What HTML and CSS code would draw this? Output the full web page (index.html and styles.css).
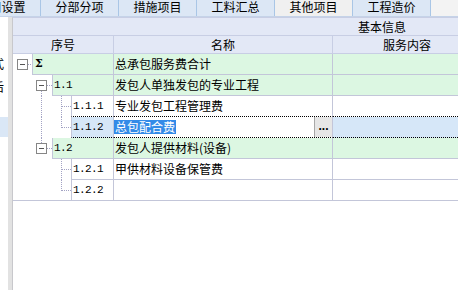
FILE: index.html
```html
<!DOCTYPE html>
<html lang="zh-CN">
  <head>
    <meta charset="UTF-8" />
    <title>其他项目</title>
    <link rel="stylesheet" href="styles.css">
  </head>
  <body>
    <div class="tabs">
      <div class="tab tab-first">费用设置</div>
      <div class="tab">分部分项</div>
      <div class="tab">措施项目</div>
      <div class="tab">工料汇总</div>
      <div class="tab active">其他项目</div>
      <div class="tab">工程造价</div>
    </div>

    <div class="main">
      <div class="side">
        <div class="side-item">计税方式</div>
        <div class="side-item">最后</div>
        <div class="side-item sel"></div>
      </div>
      <div class="splitter"></div>

      <div class="grid">
        <div class="group-head">基本信息</div>
        <div class="col-head">
          <div class="h-code">序号</div>
          <div class="h-name">名称</div>
          <div class="h-serv">服务内容</div>
        </div>

        <!-- Σ -->
        <div class="row green">
          <div class="codecol">
            <svg class="tree" width="19" height="21">
              <path d="M15 10.5h4" class="dot" />
              <rect x="4.5" y="5.5" width="10" height="10" class="box" />
              <path d="M7 10.5h5" class="minus" />
            </svg>
            <div class="code sigma">Σ</div>
          </div>
          <div class="name">总承包服务费合计</div>
          <div class="serv"></div>
        </div>

        <div class="row green">
          <div class="codecol">
            <svg class="tree" width="39" height="21">
              <path d="M34 10.5h5 M28.5 16v5" class="dot" />
              <rect x="23.5" y="5.5" width="10" height="10" class="box" />
              <path d="M26 10.5h5" class="minus" />
            </svg>
            <div class="code">1.1</div>
          </div>
          <div class="name">发包人单独发包的专业工程</div>
          <div class="serv"></div>
        </div>

        <div class="row above-focus">
          <div class="codecol">
            <svg class="tree" width="58" height="21">
              <path d="M28.5 0v21 M48.5 0v21 M49 10.5h9" class="dot" />
            </svg>
            <div class="code">1.1.1</div>
          </div>
          <div class="name">专业发包工程管理费</div>
          <div class="serv"></div>
        </div>

        <div class="row sel">
          <div class="codecol">
            <svg class="tree" width="58" height="21">
              <path d="M28.5 0v21 M48.5 0v11 M49 10.5h9" class="dot" />
            </svg>
            <div class="code">1.1.2</div>
          </div>
          <div class="name editor">
            <div class="edit-text"><span class="hl">总包配合费</span></div>
            <div class="dots">...</div>
          </div>
          <div class="serv"></div>
        </div>

        <div class="row green">
          <div class="codecol">
            <svg class="tree" width="39" height="21">
              <path d="M28.5 0v5 M34 10.5h5" class="dot" />
              <rect x="23.5" y="5.5" width="10" height="10" class="box" />
              <path d="M26 10.5h5" class="minus" />
            </svg>
            <div class="code">1.2</div>
          </div>
          <div class="name">发包人提供材料(设备)</div>
          <div class="serv"></div>
        </div>

        <div class="row">
          <div class="codecol">
            <svg class="tree" width="58" height="21">
              <path d="M48.5 0v21 M49 10.5h9" class="dot" />
            </svg>
            <div class="code">1.2.1</div>
          </div>
          <div class="name">甲供材料设备保管费</div>
          <div class="serv"></div>
        </div>

        <div class="row last">
          <div class="codecol">
            <svg class="tree" width="58" height="20">
              <path d="M48.5 0v11 M49 10.5h9" class="dot" />
            </svg>
            <div class="code">1.2.2</div>
          </div>
          <div class="name"></div>
          <div class="serv"></div>
        </div>

        <div class="empty"></div>
      </div>
    </div>
  </body>
</html>
```

FILE: styles.css
```css
* {
  box-sizing: border-box;
}

body {
  margin: 0;
  width: 458px;
  height: 290px;
  overflow: hidden;
  font-family: "Noto Sans CJK SC", sans-serif;
  font-size: 12px;
  color: #000;
  background: #fff;
}

/* tab strip */
.tabs {
  display: flex;
  height: 17px;
  background: #f3f3f3;
  border-bottom: 1px solid #c5d3e8;
}

.tab {
  flex: 0 0 78px;
  display: flex;
  justify-content: center;
  align-items: flex-start;
  line-height: 14px;
  white-space: nowrap;
  background: #dce7f5;
  border-right: 1px solid #a9c6e6;
}

.tab-first {
  margin-left: -37px;
}

.tab.active {
  background: #f0f0f0;
}

.main {
  display: flex;
  height: 273px;
}

/* left tree, mostly hidden */
.side {
  width: 8px;
  flex: none;
  overflow: hidden;
  padding-top: 35px;
  background: #fff;
}

.side-item {
  height: 23px;
  display: flex;
  justify-content: flex-end;
  align-items: center;
  padding-right: 4px;
  white-space: nowrap;
}

.side-item.sel {
  height: 20px;
  margin-top: 19px;
  background: #dae7f6;
}

.splitter {
  width: 4px;
  flex: none;
  background: #e2e2e2;
}

/* grid */
.grid {
  flex: 1;
  overflow: hidden;
  border-left: 1px solid #c8c8cc;
  border-top: 1px solid #c8cee4;
}

.group-head {
  height: 18px;
  line-height: 17px;
  padding-left: 345px;
  white-space: nowrap;
  background: #e3e8f6;
  border-bottom: 1px solid #c8cee4;
}

.col-head {
  display: flex;
  height: 18px;
  background: #e3e8f6;
  border-bottom: 1px solid #c8cee4;
}

.col-head > div {
  flex: none;
  text-align: center;
  line-height: 17px;
  border-right: 1px solid #c8cee4;
}

.h-code {
  width: 101px;
}

.h-name {
  width: 219px;
}

.h-serv {
  width: 149px;
}

.row {
  display: flex;
  height: 21px;
}

.codecol {
  width: 101px;
  flex: none;
  display: flex;
}

.tree {
  flex: none;
  display: block;
}

.tree .dot {
  fill: none;
  stroke: #a3a3c4;
  stroke-dasharray: 1 1;
}

.tree .box {
  fill: #fff;
  stroke: #868686;
}

.tree .minus {
  stroke: #555;
}

.code,
.name,
.serv {
  height: 21px;
  border-right: 1px solid #c3c6d9;
  border-bottom: 1px solid #c3c6d9;
  white-space: nowrap;
  overflow: hidden;
}

.code {
  flex: 1;
  border-left: 1px solid #c3c6d9;
  padding-left: 1px;
  font-family: "Liberation Mono", monospace;
  font-size: 11px;
  letter-spacing: -0.6px;
  line-height: 20px;
}

.code.sigma {
  padding-left: 2px;
  font-family: "DejaVu Serif", serif;
  font-size: 11px;
  font-weight: bold;
  letter-spacing: 0;
}

.name {
  width: 219px;
  flex: none;
  padding-left: 1px;
  line-height: 20px;
}

.serv {
  width: 149px;
  flex: none;
}

.green .code,
.green .name,
.green .serv {
  background: #dcf7e2;
}

.above-focus .code,
.above-focus .name,
.above-focus .serv,
.sel .code,
.sel .name,
.sel .serv {
  border-bottom: 1px dotted #000;
}

.sel .code,
.sel .serv {
  background: #d6e7f8;
}

.editor {
  display: flex;
  padding-left: 0;
  background: #fff;
}

.edit-text {
  flex: 1;
  display: flex;
  align-items: center;
}

.hl {
  line-height: 14px;
  padding: 0 1px;
  color: #fff;
  background: #338be8;
}

.dots {
  width: 18px;
  flex: none;
  text-align: center;
  font-family: "Liberation Sans", sans-serif;
  font-weight: bold;
  font-size: 12px;
  line-height: 18px;
  background: #e6e6e6;
  border-left: 1px solid #a8a8a8;
}

.row.last {
  height: 20px;
}

.last .code,
.last .name,
.last .serv {
  height: 20px;
  border-bottom: none;
}

.empty {
  height: 100px;
  border-top: 1px solid #c3c6d9;
}
```
